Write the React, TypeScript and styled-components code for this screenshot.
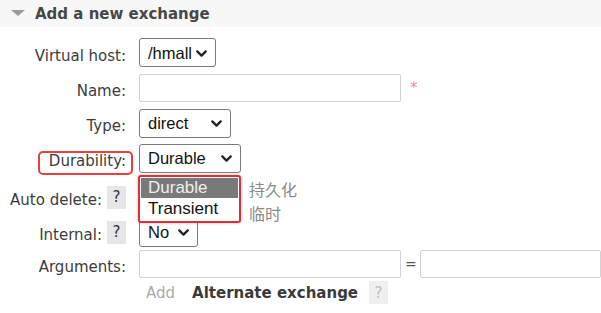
import React from 'react';
import styled, { createGlobalStyle } from 'styled-components';
import { ChevronDown } from 'lucide-react';

const GlobalStyle = createGlobalStyle`
  html, body {
    margin: 0;
    padding: 0;
    background: #ffffff;
  }
  body {
    font-family: "DejaVu Sans", Verdana, sans-serif;
    color: #3c3c3c;
    overflow: hidden;
  }
`;

const Page = styled.div`
  width: 601px;
  height: 313px;
  overflow: hidden;
`;

const SectionHeader = styled.div`
  display: flex;
  align-items: center;
  gap: 10px;
  height: 27px;
  padding-left: 11px;
  background: #f7f7f7;
`;

const Triangle = styled.span`
  width: 0;
  height: 0;
  border-left: 7px solid transparent;
  border-right: 7px solid transparent;
  border-top: 6px solid #9a9a9a;
  margin-top: -2px;
`;

const Title = styled.h2`
  margin: 0;
  font-size: 15px;
  font-weight: bold;
  color: #474747;
`;

const Form = styled.div`
  display: grid;
  grid-template-columns: 126px 1fr;
  column-gap: 13px;
  padding-top: 8px;
`;

const LabelCell = styled.div<{ h: number }>`
  height: ${({ h }) => h}px;
  display: flex;
  align-items: center;
  justify-content: flex-end;
  gap: 5px;
  padding-top: 6px;
  box-sizing: border-box;
  font-size: 15px;
  white-space: nowrap;
`;

const ValueCell = styled.div<{ h: number }>`
  height: ${({ h }) => h}px;
  display: flex;
  align-items: center;
  gap: 4px;
  min-width: 0;
`;

const LabelText = styled.span<{ marked?: boolean }>`
  position: relative;
  &::after {
    content: '';
    display: ${({ marked }) => (marked ? 'block' : 'none')};
    position: absolute;
    left: -11px;
    right: -7px;
    top: -1px;
    bottom: -5px;
    border: 2.5px solid #e8403f;
    border-radius: 5px;
  }
`;

const Help = styled.span<{ faded?: boolean }>`
  display: inline-flex;
  align-items: center;
  justify-content: center;
  width: 19px;
  height: 23px;
  margin-top: ${({ faded }) => (faded ? '0' : '-6px')};
  background: ${({ faded }) => (faded ? '#efefef' : '#e6e6e6')};
  color: ${({ faded }) => (faded ? '#bcbcbc' : '#333')};
  font-size: 15px;
  font-weight: normal;
`;

const SelectWrap = styled.div`
  position: relative;
`;

const SelectBox = styled.div<{ w: number; covered?: boolean }>`
  width: ${({ w }) => w}px;
  height: 29px;
  box-sizing: border-box;
  display: flex;
  align-items: center;
  justify-content: space-between;
  padding: 1px 5px 0 8px;
  border: 1px solid #7a7a7a;
  border-radius: 3px;
  background: #fff;
  font-family: "Liberation Sans", Arial, sans-serif;
  font-size: 16.5px;
  color: #111;
  visibility: ${({ covered }) => (covered ? 'hidden' : 'visible')};
`;

const TextInput = styled.div<{ w?: number }>`
  width: ${({ w }) => (w ? `${w}px` : 'auto')};
  flex: ${({ w }) => (w ? 'none' : '1')};
  height: 28px;
  box-sizing: border-box;
  border: 1px solid #d2d2d2;
  border-radius: 2px;
  background: #fff;
`;

const Required = styled.span`
  margin-left: 5px;
  color: #f08aa0;
  font-size: 15px;
`;

const Equals = styled.span`
  width: 11px;
  text-align: center;
  font-size: 14px;
  color: #555;
`;

const Dropdown = styled.div`
  position: absolute;
  top: 31px;
  left: -1px;
  width: 103px;
  box-sizing: border-box;
  padding: 1px;
  border: 2px solid #d8313b;
  border-radius: 3px;
  background: #fff;
  box-shadow: 0 0 3px rgba(216, 49, 59, 0.45);
  z-index: 2;
`;

const Option = styled.div<{ active?: boolean; h: number }>`
  height: ${({ h }) => h}px;
  display: flex;
  align-items: center;
  padding-left: 7px;
  background: ${({ active }) => (active ? '#797979' : '#fff')};
  color: ${({ active }) => (active ? '#eeeeee' : '#111')};
  font-family: "Liberation Sans", Arial, sans-serif;
  font-size: 17px;
`;

const Notes = styled.div`
  position: absolute;
  top: 34px;
  left: 110px;
  display: flex;
  flex-direction: column;
  gap: 2px;
  font-family: "Noto Sans CJK SC", sans-serif;
  font-size: 16px;
  line-height: 22px;
  color: #8a8a8a;
  white-space: nowrap;
  z-index: 2;
`;

const AddRow = styled.div`
  display: flex;
  align-items: center;
  gap: 17px;
  padding-left: 7px;
  font-size: 15px;
`;

const AddLink = styled.span`
  color: #aaaaaa;
`;

const SubHeading = styled.span`
  display: inline-flex;
  align-items: center;
  gap: 11px;
  font-weight: bold;
  color: #3a3a3a;
`;

const Select: React.FC<{ value: string; w: number; covered?: boolean }> = ({ value, w, covered }) => (
  <SelectBox w={w} covered={covered}>
    <span>{value}</span>
    <ChevronDown size={17} strokeWidth={3.2} color="#222" />
  </SelectBox>
);

export default function App() {
  return (
    <Page>
      <GlobalStyle />
      <SectionHeader>
        <Triangle />
        <Title>Add a new exchange</Title>
      </SectionHeader>

      <Form>
        <LabelCell h={35}>
          <LabelText>Virtual host:</LabelText>
        </LabelCell>
        <ValueCell h={35}>
          <Select value="/hmall" w={77} />
        </ValueCell>

        <LabelCell h={36}>
          <LabelText>Name:</LabelText>
        </LabelCell>
        <ValueCell h={36}>
          <TextInput w={262} />
          <Required>*</Required>
        </ValueCell>

        <LabelCell h={34}>
          <LabelText>Type:</LabelText>
        </LabelCell>
        <ValueCell h={34}>
          <Select value="direct" w={92} />
        </ValueCell>

        <LabelCell h={36}>
          <LabelText marked>Durability:</LabelText>
        </LabelCell>
        <ValueCell h={36}>
          <SelectWrap>
            <Select value="Durable" w={102} />
            <Dropdown>
              <Option active h={20}>Durable</Option>
              <Option h={22}>Transient</Option>
            </Dropdown>
            <Notes>
              <span>持久化</span>
              <span>临时</span>
            </Notes>
          </SelectWrap>
        </ValueCell>

        <LabelCell h={42}>
          <LabelText>Auto delete:</LabelText>
          <Help>?</Help>
        </LabelCell>
        <ValueCell h={42}>
          <Select value="No" w={59} covered />
        </ValueCell>

        <LabelCell h={28}>
          <LabelText>Internal:</LabelText>
          <Help>?</Help>
        </LabelCell>
        <ValueCell h={28}>
          <Select value="No" w={59} />
        </ValueCell>

        <LabelCell h={35}>
          <LabelText>Arguments:</LabelText>
        </LabelCell>
        <ValueCell h={35}>
          <TextInput w={262} />
          <Equals>=</Equals>
          <TextInput />
        </ValueCell>

        <div />
        <AddRow>
          <AddLink>Add</AddLink>
          <SubHeading>
            Alternate exchange
            <Help faded>?</Help>
          </SubHeading>
        </AddRow>
      </Form>
    </Page>
  );
}
